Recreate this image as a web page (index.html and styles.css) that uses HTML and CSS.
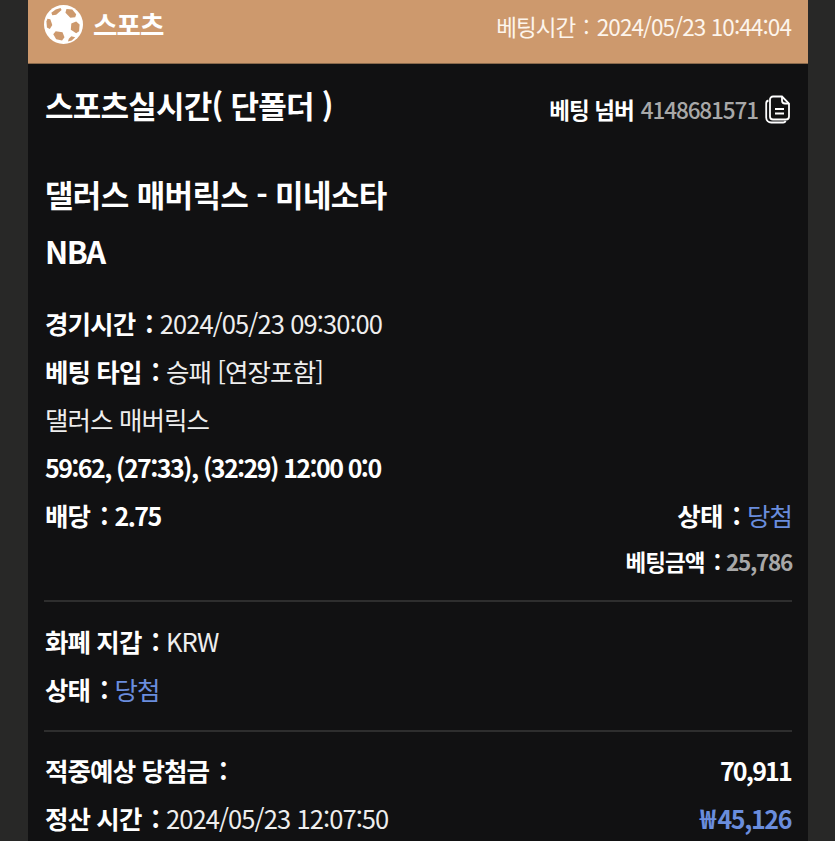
FILE: index.html
```html
<!DOCTYPE html>
<html lang="ko">
<head>
<meta charset="utf-8">
<title>스포츠</title>
<link rel="stylesheet" href="styles.css">
</head>
<body>
<main class="card">
  <header class="top">
    <div class="brand">
      <svg class="ball" viewBox="0 0 40 40" aria-hidden="true">
        <circle cx="20" cy="20" r="20" fill="#fff"/>
        <g fill="#cd996d">
          <path d="M12 4.500l5 -1.500 1 2 -5.500 5 -4 .5 -1 -2.500z"/>
          <path d="M23 4l6 .5 4 5 -1 3 -5 .5 -5 -5z"/>
          <path d="M28 19l5 -2 3.500 3 -.5 7 -3 2 -5.500 -3.500z"/>
          <path d="M3.500 14l3 .5 2 6 -2.500 4 -3 -1.500 -.5 -6z"/>
          <path d="M12 27l7 1 2 5 -2.500 3.500 -6 -1.500 -3 -5z"/>
          <path d="M28 32l4 1 -3.500 3.500 -4 1 1 -3z"/>
        </g>
      </svg>
      <span class="brand-name">스포츠</span>
    </div>
    <div class="bet-time">베팅시간<span class="colon">:</span>2024/05/23 10:44:04</div>
  </header>
  <section class="head">
    <h1 class="title">스포츠실시간( 단폴더 )</h1>
    <div class="bet-no">
      <b>베팅 넘버</b> <span class="grey">4148681571</span>
      <svg class="copy" viewBox="0 0 26 29" aria-hidden="true">
        <path d="M8 1.500h9l7 7v13a3 3 0 0 1-3 3H8a3 3 0 0 1-3-3v-17a3 3 0 0 1 3-3z" fill="none" stroke="#fff" stroke-width="1.800"/>
        <path d="M17 1.500v4a3 3 0 0 0 3 3h4" fill="none" stroke="#fff" stroke-width="1.800"/>
        <path d="M10 14h9M10 18.500h9" fill="none" stroke="#fff" stroke-width="2"/>
        <path d="M3.500 5.500A3 3 0 0 0 1.200 8.500v14a5 5 0 0 0 5 5h12a3 3 0 0 0 2.500-1.500" fill="none" stroke="#fff" stroke-width="1.800"/>
      </svg>
    </div>
  </section>
  <section class="match">
    <h2 class="match-name">댈러스 매버릭스 - 미네소타</h2>
    <h2 class="league">NBA</h2>
  </section>
  <section class="rows">
    <div class="row"><b>경기시간<span class="colon">:</span></b>2024/05/23 09:30:00</div>
    <div class="row"><b>베팅 타입<span class="colon">:</span></b>승패 [연장포함]</div>
    <div class="row">댈러스 매버릭스</div>
    <div class="row score">59:62, (27:33), (32:29) 12:00 0:0</div>
    <div class="row split">
      <span><b>배당<span class="colon">:</span></b><span class="score">2.75</span></span>
      <span><b>상태<span class="colon">:</span></b><span class="blue">당첨</span></span>
    </div>
    <div class="row small"><b>베팅금액<span class="colon">:</span></b><span class="grey">25,786</span></div>
  </section>
  <section class="rows bordered wallet">
    <div class="row"><b>화폐 지갑<span class="colon">:</span></b>KRW</div>
    <div class="row"><b>상태<span class="colon">:</span></b><span class="blue">당첨</span></div>
  </section>
  <section class="rows bordered result">
    <div class="row split"><b>적중예상 당첨금<span class="colon">:</span></b><b class="num">70,911</b></div>
    <div class="row split"><span><b>정산 시간<span class="colon">:</span></b>2024/05/23 12:07:50</span><b class="num blue"><span class="won">₩</span>45,126</b></div>
  </section>
</main>
</body>
</html>
```
FILE: styles.css
```css
* { box-sizing: border-box; }
html, body { margin: 0; height: 841px; overflow: hidden; background: #282827; }
body { font-family: "Noto Sans CJK KR", "Noto Sans", sans-serif; color: #eee; font-size: 25.5px; letter-spacing: -0.9px; }
b { font-weight: 700; color: #fff; }
.card { width: 780px; height: 841px; margin-left: 28px; background: #111112; overflow: hidden; }
.colon { display: inline-block; margin: 0 7px 0 10px; font-weight: 700; }
.top { height: 64px; display: flex; justify-content: space-between; background: #cd996d; border-bottom: 1px solid #8a6a4c; padding: 0 17px 0 16px; color: #fdf5ec; }
.brand { display: flex; align-items: flex-start; padding-top: 5px; gap: 10px; }
.ball { width: 39px; height: 39px; }
.brand-name { font-size: 26.500px; font-weight: 700; color: #fff; line-height: 38px; }
.bet-time { font-size: 22.500px; line-height: 52px; }
.bet-time .colon { font-weight: 400; margin: 0 8px; }
.head { display: flex; justify-content: space-between; padding: 19px 17px 0 17px; height: 101px; }
.title { margin: 0; font-size: 31px; line-height: 44px; font-weight: 700; color: #fff; letter-spacing: -0.750px; }
.bet-no { display: flex; align-items: center; gap: 7px; height: 52px; font-size: 22.500px; }
.grey { color: #a8a8a8; font-weight: 500; letter-spacing: -1.100px; }
.copy { width: 26px; height: 29px; }
.match { padding: 0 17px; }
.match-name, .league { margin: 0; font-size: 31px; line-height: 57px; font-weight: 700; color: #fff; }
.match-name { letter-spacing: -0.650px; }
.league { letter-spacing: -1.500px; }
.rows { padding: 0 16px 0 17px; }
.match + .rows { margin-top: 20px; }
.row { line-height: 48px; height: 48px; white-space: nowrap; }
.score { font-weight: 700; font-size: 25px; color: #fff; letter-spacing: -1.600px; }
.split { display: flex; justify-content: space-between; }
.blue { color: #6a8ddd; font-weight: 400; }
.small { text-align: right; font-size: 22.500px; height: 44px; line-height: 44px; }
.small .grey { font-weight: 700; letter-spacing: -1.300px; }
.small .colon { margin: 0 6px 0 9px; }
.bordered { margin: 0 16px; padding: 15px 0 17px 1px; border-top: 2px solid #2e2e2e; }
.wallet { margin-top: 17px; }
.result { padding-top: 14px; }
.num { font-size: 25px; letter-spacing: -1.800px; font-weight: 700; padding-right: 1px; }
.num.blue { color: #6a8ddd; letter-spacing: -1.400px; }
.won { margin-right: 3px; font-size: 27px; }
```
